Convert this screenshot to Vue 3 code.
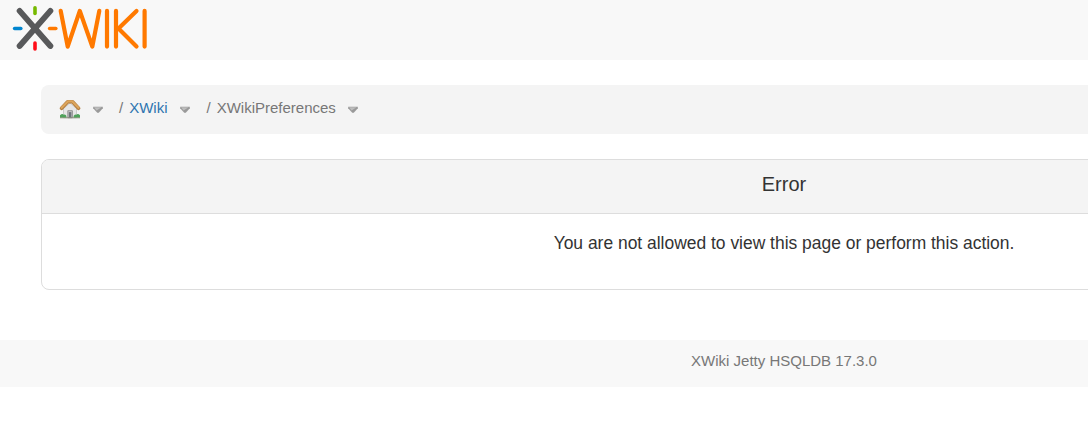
<template>
  <div class="viewport">
    <div class="page">
      <header class="navbar">
        <a class="brand" href="#" aria-label="XWiki">
          <svg width="160" height="60" viewBox="0 0 160 60" fill="none" stroke-linecap="round" stroke-linejoin="round">
            <g stroke-width="3.6">
              <path d="M35 7.8v5.6" stroke="#76b900" />
              <path d="M35 43v6" stroke="#ff0d17" />
              <path d="M14.6 28.5h6.2" stroke="#0085cf" />
              <path d="M49.6 28.5h6.2" stroke="#ff7900" />
            </g>
            <path d="M19.6 10.9L50.4 46M50.4 10.9L19.6 46" stroke="#58595b" stroke-width="5.8" />
            <g stroke="#ff7900" stroke-width="4.2">
              <path d="M60.7 10.9L67.7 46.6L79.8 10.9L92.3 46.6L99.3 10.9" />
              <path d="M107 10.9v35.7M116 10.9v35.7M144.6 10.9v35.7" />
              <path d="M136.5 10.9L118.5 28.5L136.5 46.6" />
            </g>
          </svg>
        </a>
      </header>

      <main class="content">
        <ol class="breadcrumb">
          <li class="home">
            <a href="#" aria-label="Home">
              <svg class="icon-home" viewBox="0 0 22 20">
                <path d="M4.5 9.5L11 4l6.5 5.5v9.2h-13z" fill="#e6e6e6" stroke="#b4b4b4" stroke-width=".6" />
                <path d="M8.8 18.7v-7h4.6v7z" fill="#c9c9c9" stroke="#777" stroke-width=".7" />
                <path d="M9.8 18.7v-5.6h2.6v5.6z" fill="#6f747b" />
                <path d="M2.6 9.3L8.7 2.8h4.8l6 6.5" fill="none" stroke="#b07a3c" stroke-width="3.6" stroke-linejoin="round" stroke-linecap="round" />
                <path d="M2.6 8.8L8.8 2.4h4.6l6.1 6.4" fill="none" stroke="#dca55c" stroke-width="2.2" stroke-linejoin="round" stroke-linecap="round" />
                <path d="M1 18.7v-2.4q2.4-2.2 3.6-.6q2.2-.8 2.8 1.4v1.6zM14.6 18.7v-1.6q.8-2 2.8-1.4q1.6-1.6 3.6.6v2.4z" fill="#4fa25b" />
                <path d="M1 18.8h20" stroke="#858a74" stroke-width=".8" />
              </svg>
            </a>
            <svg class="caret" viewBox="0 0 10 8">
              <path d="M.2.7h9.6v1.6L5.8 6.8H4.2L.2 2.3z" fill="#999" />
              <path d="M1 1.2h7.6L3.6 4.4z" fill="#bdbdbd" />
            </svg>
          </li>
          <li v-for="item in crumbs" :key="item.label">
            <span class="separator">/</span>
            <a v-if="item.link" href="#">{{ item.label }}</a>
            <span v-else>{{ item.label }}</span>
            <svg class="caret" viewBox="0 0 10 8">
              <path d="M.2.7h9.6v1.6L5.8 6.8H4.2L.2 2.3z" fill="#999" />
              <path d="M1 1.2h7.6L3.6 4.4z" fill="#bdbdbd" />
            </svg>
          </li>
        </ol>

        <section class="panel">
          <div class="panel-heading">Error</div>
          <div class="panel-body">You are not allowed to view this page or perform this action.</div>
        </section>
      </main>

      <footer class="footer">XWiki Jetty HSQLDB 17.3.0</footer>
    </div>
  </div>
</template>

<script setup>
const crumbs = [
  { label: 'XWiki', link: true },
  { label: 'XWikiPreferences', link: false }
];
</script>

<style>
body {
  background: #fff;
}
</style>

<style scoped>
.viewport {
  height: 427px;
  overflow: hidden;
}
.page {
  width: 1568px;
  font-family: "Helvetica Neue", Helvetica, "Liberation Sans", Arial, sans-serif;
  font-size: 15px;
  line-height: 20px;
  color: #333;
}
.navbar {
  height: 60px;
  background: #f8f8f8;
}
.brand svg {
  display: block;
}
.content {
  padding: 25px 41px 0;
}
.breadcrumb {
  display: flex;
  align-items: flex-start;
  height: 49px;
  box-sizing: border-box;
  margin: 0 0 25px;
  padding: 13px 18px 0;
  list-style: none;
  background: #f4f4f4;
  border-radius: 8px;
  color: #777;
}
.breadcrumb li {
  display: flex;
  align-items: flex-start;
}
.breadcrumb a {
  color: #2e75b0;
  text-decoration: none;
}
.home {
  margin-right: 16px;
}
.icon-home {
  display: block;
  width: 22px;
  height: 20px;
  margin-top: 1px;
}
.caret {
  width: 10px;
  height: 8px;
  margin: 8px 0 0 12px;
}
.separator {
  margin-right: 6px;
}
.breadcrumb li + li + li {
  margin-left: 17px;
}
.panel {
  height: 131px;
  box-sizing: border-box;
  border: 1px solid #ddd;
  border-radius: 8px;
  overflow: hidden;
  text-align: center;
}
.panel-heading {
  height: 54px;
  box-sizing: border-box;
  padding-top: 12px;
  background: #f4f4f4;
  border-bottom: 1px solid #ddd;
  font-size: 20px;
  line-height: 24px;
}
.panel-body {
  padding-top: 17px;
  font-size: 17.45px;
  line-height: 24px;
}
.footer {
  height: 47px;
  box-sizing: border-box;
  margin-top: 50px;
  padding-top: 11px;
  background: #f8f8f8;
  color: #777;
  text-align: center;
}
</style>
